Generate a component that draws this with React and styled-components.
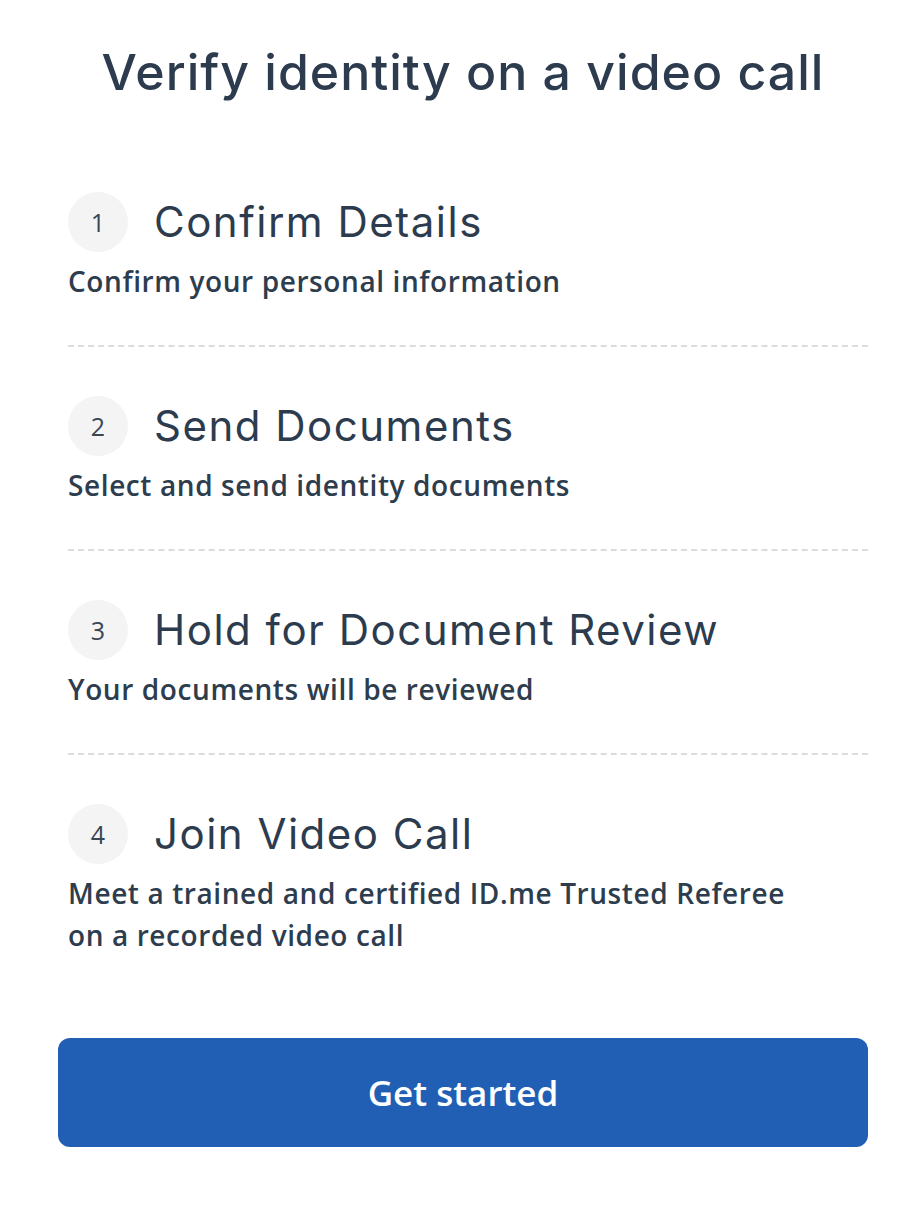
import React from 'react'
import styled, { createGlobalStyle } from 'styled-components'

const GlobalStyle = createGlobalStyle`
  html, body {
    margin: 0;
    padding: 0;
    background: #ffffff;
  }
  body {
    font-family: 'Open Sans', 'Liberation Sans', sans-serif;
    color: #2e3d4e;
  }
`

const Page = styled.main`
  width: 918px;
  box-sizing: border-box;
  padding: 44px 50px 60px 58px;
  display: flex;
  flex-direction: column;
`

const Heading = styled.h1`
  margin: 0;
  text-align: center;
  font-family: Inter, 'Noto Sans', sans-serif;
  font-weight: 500;
  font-size: 50px;
  line-height: 56px;
  letter-spacing: 1px;
  color: #2c3c4e;
`

const StepList = styled.ol`
  list-style: none;
  margin: 92px 0 0 10px;
  padding: 0;
  display: flex;
  flex-direction: column;
`

const Step = styled.li`
  padding: ${({ $first }) => ($first ? '0' : '49px')} 0 ${({ $last }) => ($last ? '0' : '43px')};
  border-bottom: ${({ $last }) => ($last ? 'none' : '2px dashed #dcdcdc')};
`

const StepHead = styled.div`
  display: flex;
  align-items: center;
  gap: 26px;
`

const Badge = styled.span`
  width: 60px;
  height: 60px;
  border-radius: 50%;
  background: #f4f4f5;
  display: flex;
  align-items: center;
  justify-content: center;
  font-family: 'Open Sans', sans-serif;
  font-size: 25px;
  color: #3a4654;
  flex-shrink: 0;
`

const StepTitle = styled.h2`
  margin: 0;
  font-family: Inter, 'Noto Sans', sans-serif;
  font-weight: 400;
  font-size: 42px;
  line-height: 48px;
  letter-spacing: 1.5px;
  color: #2c3c4e;
`

const StepText = styled.p`
  margin: 8px 0 0;
  max-width: 745px;
  font-family: 'Open Sans', sans-serif;
  font-weight: 600;
  font-size: 28px;
  line-height: 42px;
  letter-spacing: 0.6px;
  color: #2e3d4e;
`

const PrimaryButton = styled.button`
  margin-top: 82px;
  height: 109px;
  width: 100%;
  border: none;
  border-radius: 12px;
  background: #215fb5;
  color: #ffffff;
  font-family: 'Open Sans', sans-serif;
  font-weight: 600;
  font-size: 35px;
  cursor: pointer;
`

const steps = [
  { title: 'Confirm Details', text: 'Confirm your personal information' },
  { title: 'Send Documents', text: 'Select and send identity documents' },
  { title: 'Hold for Document Review', text: 'Your documents will be reviewed' },
  {
    title: 'Join Video Call',
    text: 'Meet a trained and certified ID.me Trusted Referee on a recorded video call',
  },
]

const App = () => {
  return (
    <>
      <GlobalStyle />
      <Page>
        <Heading>Verify identity on a video call</Heading>
        <StepList>
          {steps.map((step, index) => (
            <Step key={index} $first={index === 0} $last={index === steps.length - 1}>
              <StepHead>
                <Badge>{index + 1}</Badge>
                <StepTitle>{step.title}</StepTitle>
              </StepHead>
              <StepText>{step.text}</StepText>
            </Step>
          ))}
        </StepList>
        <PrimaryButton type="button">Get started</PrimaryButton>
      </Page>
    </>
  )
}

export default App
